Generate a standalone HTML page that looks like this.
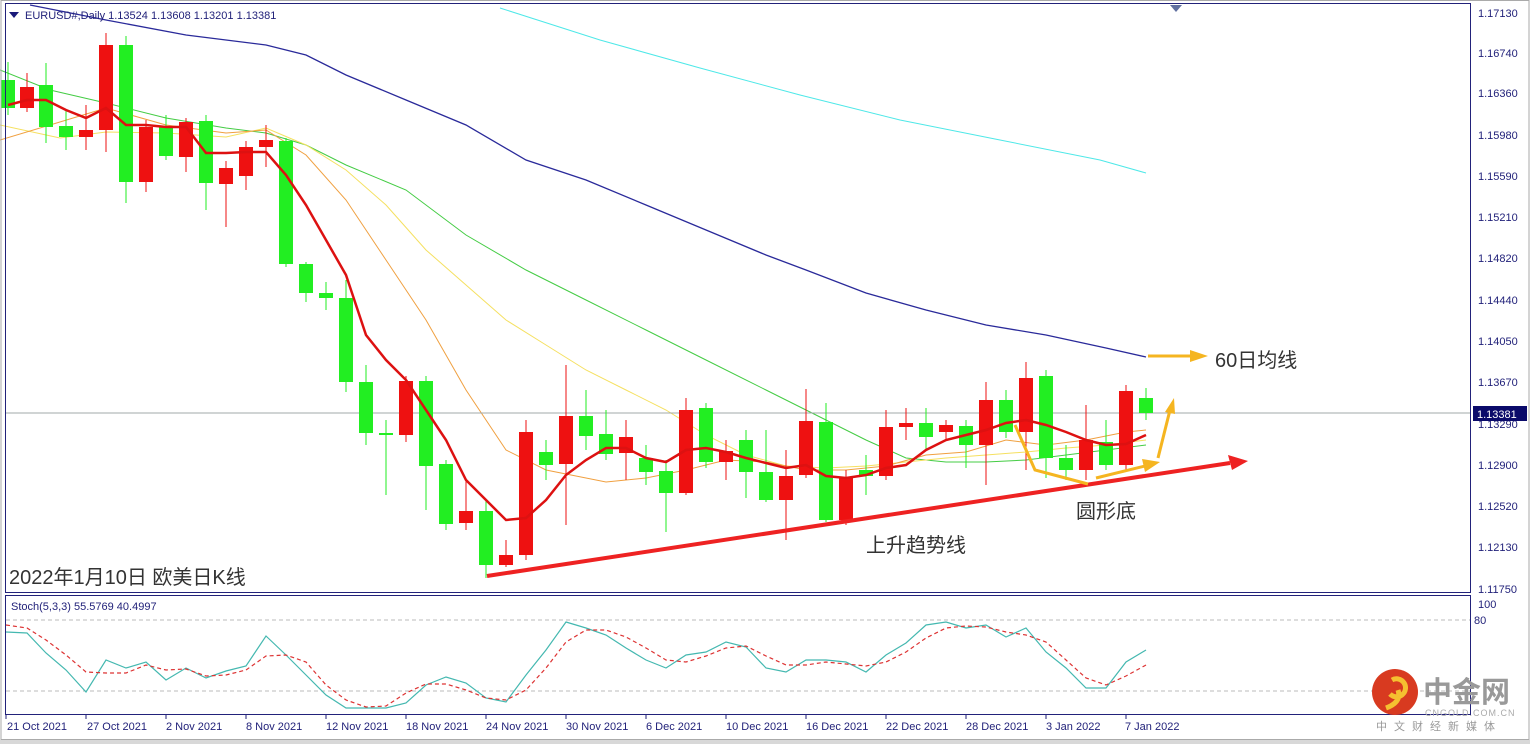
<!DOCTYPE html>
<html><head><meta charset="utf-8"><style>
body{margin:0;background:#fff;width:1530px;height:744px;overflow:hidden;font-family:"Liberation Sans","Noto Sans CJK SC",sans-serif}
svg text{font-family:"Liberation Sans","Noto Sans CJK SC",sans-serif}
</style></head><body>
<svg width="1530" height="744" xmlns="http://www.w3.org/2000/svg">
<rect x="0" y="0" width="1530" height="744" fill="#fff"/>
<rect x="0" y="740" width="1530" height="4" fill="#d8d8d8"/>
<!-- main pane -->
<g fill="none" stroke-width="1">
<polyline stroke="#4ee8e8" points="500,8 600,40 700,68 800,95 900,120 1000,140 1100,160 1146,173"/>
<polyline stroke="#2a2a9a" stroke-width="1.3" points="30,5 106,20 186,35 266,45 306,55 346,75 406,100 466,125 526,160 586,180 646,205 706,230 766,255 806,270 866,293 926,310 986,325 1046,335 1106,348 1146,357"/>
<polyline stroke="#44cc44" points="0,70 50,90 106,103 166,118 226,128 266,133 306,145 346,165 406,190 466,235 526,270 586,300 646,330 706,360 766,390 826,420 866,440 906,458 946,462 986,462 1026,460 1066,455 1106,450 1146,445"/>
<polyline stroke="#f5e060" points="0,125 60,138 106,132 166,133 226,137 266,128 306,145 346,170 386,205 426,250 466,285 506,320 546,345 586,370 626,390 666,410 706,435 746,455 786,466 826,468 866,466 906,462 946,458 986,455 1026,452 1066,448 1106,445 1146,440"/>
<polyline stroke="#f0a040" points="0,140 50,125 106,108 166,125 226,133 266,130 306,155 346,200 386,260 426,320 466,390 506,450 546,470 606,482 646,478 686,470 726,460 766,462 806,470 846,470 886,466 926,455 966,452 1006,440 1046,445 1086,440 1126,432 1146,430"/>
</g>
<line x1="6" y1="413" x2="1470" y2="413" stroke="#a0a8a8" stroke-width="1"/>
<g id="c"></g>
<polyline fill="none" stroke="#dd1111" stroke-width="2.5" points="8,105 27,100 46,100 66,110 86,118 106,108 126,125 146,125 166,127 186,127 206,153 226,153 246,152 266,152 286,175 306,205 326,240 346,275 366,335 386,360 406,380 426,410 446,440 466,480 486,500 506,520 526,518 546,500 566,475 586,460 606,448 626,448 646,458 666,462 686,450 706,448 726,452 746,458 766,463 786,468 806,465 826,476 846,478 866,475 886,468 906,465 926,450 946,440 966,435 986,430 1006,423 1026,420 1046,425 1066,432 1086,440 1106,445 1126,444 1146,435"/>
<!-- annotations -->
<line x1="487" y1="576" x2="1230" y2="463" stroke="#ee2222" stroke-width="4"/>
<polygon points="1248,461 1228,455 1232,470" fill="#ee2222"/>
<line x1="1148" y1="356" x2="1190" y2="356" stroke="#f5b520" stroke-width="3"/>
<polygon points="1208,356 1190,350 1190,362" fill="#f5b520"/>
<polyline fill="none" stroke="#f5b520" stroke-width="3" points="1015,425 1035,470 1088,484"/>
<line x1="1096" y1="478" x2="1145" y2="466" stroke="#f5b520" stroke-width="3"/>
<polygon points="1160,462 1142,459 1145,472" fill="#f5b520"/>
<line x1="1158" y1="458" x2="1170" y2="410" stroke="#f5b520" stroke-width="3"/>
<polygon points="1174,398 1165,412 1175,414" fill="#f5b520"/>
<text x="1215" y="367" font-size="20" fill="#333">60日均线</text>
<text x="1076" y="518" font-size="20" fill="#333">圆形底</text>
<text x="866" y="552" font-size="20" fill="#333">上升趋势线</text>
<text x="9" y="584" font-size="20" fill="#333">2022年1月10日 欧美日K线</text>
<polygon points="9,12 19,12 14,18" fill="#1a1a7a"/>
<text x="25" y="19" font-size="11" fill="#22227a">EURUSD#,Daily  1.13524 1.13608 1.13201 1.13381</text>
<polygon points="1170,5 1182,5 1176,12" fill="#6070a0"/>
<!-- frames -->
<rect x="5.5" y="3.5" width="1465" height="589" fill="none" stroke="#22227a"/>
<rect x="5.5" y="595.5" width="1465" height="119" fill="none" stroke="#22227a"/>
<rect x="1" y="0.5" width="1528" height="739" fill="none" stroke="#aaa"/>
<!-- price axis -->
<g font-size="11" fill="#22227a">
<text x="1478" y="17">1.17130</text><text x="1478" y="57">1.16740</text><text x="1478" y="97">1.16360</text><text x="1478" y="139">1.15980</text><text x="1478" y="180">1.15590</text><text x="1478" y="221">1.15210</text><text x="1478" y="262">1.14820</text><text x="1478" y="304">1.14440</text><text x="1478" y="345">1.14050</text><text x="1478" y="386">1.13670</text><text x="1478" y="428">1.13290</text><text x="1478" y="469">1.12900</text><text x="1478" y="510">1.12520</text><text x="1478" y="551">1.12130</text><text x="1478" y="593">1.11750</text>
<text x="1478" y="608">100</text><text x="1474" y="624">80</text>
</g>
<rect x="1473" y="406" width="54" height="15" fill="#0a0a6a"/>
<text x="1477" y="418" font-size="11" fill="#fff">1.13381</text>
<!-- stoch -->
<text x="11" y="610" font-size="11" fill="#22227a">Stoch(5,3,3) 55.5769 40.4997</text>
<line x1="6" y1="620" x2="1470" y2="620" stroke="#bbb" stroke-dasharray="4,3"/>
<line x1="6" y1="691" x2="1470" y2="691" stroke="#bbb" stroke-dasharray="4,3"/>
<polyline fill="none" stroke="#44b8b0" stroke-width="1.2" points="6,632 27,633 46,653 66,670 86,692 106,660 126,668 146,662 166,680 186,668 206,678 226,671 246,666 266,636 286,655 306,675 326,695 346,708 366,708 386,708 406,703 426,685 446,677 466,683 486,698 506,702 526,675 546,650 566,622 586,628 606,635 626,648 646,660 666,668 686,655 706,652 726,642 746,647 766,668 786,672 806,660 826,660 846,662 866,672 886,655 906,643 926,625 946,622 966,628 986,625 1006,637 1026,628 1046,652 1066,668 1086,688 1106,688 1126,662 1146,650"/>
<polyline fill="none" stroke="#dd3333" stroke-width="1.2" stroke-dasharray="4,3" points="6,625 27,628 46,640 66,655 86,672 106,673 126,673 146,665 166,670 186,669 206,676 226,675 246,670 266,656 286,655 306,662 326,685 346,700 366,707 386,706 406,693 426,684 446,684 466,690 486,698 506,700 526,690 546,668 566,642 586,630 606,630 626,637 646,648 666,660 686,662 706,656 726,648 746,646 766,656 786,665 806,665 826,662 846,664 866,666 886,662 906,652 926,638 946,628 966,626 986,627 1006,632 1026,635 1046,642 1066,660 1086,678 1106,685 1126,676 1146,665"/>
<!-- time axis -->
<g font-size="11" fill="#22227a">
<text x="7" y="730">21 Oct 2021</text><text x="87" y="730">27 Oct 2021</text><text x="166" y="730">2 Nov 2021</text><text x="246" y="730">8 Nov 2021</text><text x="326" y="730">12 Nov 2021</text><text x="406" y="730">18 Nov 2021</text><text x="486" y="730">24 Nov 2021</text><text x="566" y="730">30 Nov 2021</text><text x="646" y="730">6 Dec 2021</text><text x="726" y="730">10 Dec 2021</text><text x="806" y="730">16 Dec 2021</text><text x="886" y="730">22 Dec 2021</text><text x="966" y="730">28 Dec 2021</text><text x="1046" y="730">3 Jan 2022</text><text x="1125" y="730">7 Jan 2022</text>
</g>
<g stroke="#22227a"><line x1="6" y1="714" x2="6" y2="719"/><line x1="86" y1="714" x2="86" y2="719"/><line x1="166" y1="714" x2="166" y2="719"/><line x1="246" y1="714" x2="246" y2="719"/><line x1="326" y1="714" x2="326" y2="719"/><line x1="406" y1="714" x2="406" y2="719"/><line x1="486" y1="714" x2="486" y2="719"/><line x1="566" y1="714" x2="566" y2="719"/><line x1="646" y1="714" x2="646" y2="719"/><line x1="726" y1="714" x2="726" y2="719"/><line x1="806" y1="714" x2="806" y2="719"/><line x1="886" y1="714" x2="886" y2="719"/><line x1="966" y1="714" x2="966" y2="719"/><line x1="1046" y1="714" x2="1046" y2="719"/><line x1="1126" y1="714" x2="1126" y2="719"/></g>
<!-- logo -->
<circle cx="1395" cy="692" r="23" fill="#d83a20"/>
<path d="M1392,680 a9,9 0 1 1 -2,14 M1398,690 q4,12 -12,18" fill="none" stroke="#f5c030" stroke-width="5"/>
<text x="1423" y="702" font-size="29" font-weight="bold" fill="#999">中金网</text>
<text x="1425" y="716" font-size="9" fill="#aaa" letter-spacing="1">CNGOLD.COM.CN</text>
<text x="1376" y="730" font-size="11" fill="#999" letter-spacing="7">中文财经新媒体</text>
</svg>
<script>
const d=[[8,'g',80,108,62,115],[27,'r',87,108,73,112],[46,'g',85,127,63,143],[66,'g',126,137,110,150],[86,'r',130,137,105,150],[106,'r',45,130,33,152],[126,'g',45,182,36,203],[146,'r',127,182,120,192],[166,'g',126,156,115,160],[186,'r',122,157,118,172],[206,'g',121,183,115,210],[226,'r',168,184,161,227],[246,'r',147,176,141,190],[266,'r',140,147,125,167],[286,'g',141,264,138,267],[306,'g',264,293,262,302],[326,'g',293,298,282,310],[346,'g',298,382,280,392],[366,'g',382,433,365,445],[386,'g',433,435,420,495],[406,'r',381,435,376,442],[426,'g',381,466,376,510],[446,'g',464,524,460,530],[466,'r',511,523,480,530],[486,'g',511,565,500,578],[506,'r',555,565,540,567],[526,'r',432,555,420,560],[546,'g',452,465,440,480],[566,'r',416,464,365,525],[586,'g',416,436,390,450],[606,'g',434,454,410,460],[626,'r',437,453,420,480],[646,'g',458,472,445,485],[666,'g',471,493,460,532],[686,'r',410,493,398,495],[706,'g',408,462,403,468],[726,'r',451,462,440,480],[746,'g',440,472,430,498],[766,'g',472,500,430,502],[786,'r',476,500,450,540],[806,'r',421,475,389,478],[826,'g',422,520,403,522],[846,'r',477,520,470,525],[866,'g',470,476,455,495],[886,'r',427,476,410,480],[906,'r',423,427,408,440],[926,'g',423,437,408,450],[946,'r',425,432,420,440],[966,'g',426,445,420,468],[986,'r',400,445,382,485],[1006,'g',400,432,390,438],[1026,'r',378,432,362,470],[1046,'g',376,458,370,478],[1066,'g',458,470,445,480],[1086,'r',440,470,405,480],[1106,'g',442,465,420,470],[1126,'r',391,465,385,470],[1146,'g',398,413,388,420]];
let s='';for(const [x,c,t,b,h,l] of d){const col=c=='g'?'#22ee22':'#ee1111';s+=`<line x1="${x}" y1="${h}" x2="${x}" y2="${l}" stroke="${col}" stroke-width="1"/><rect x="${x-7}" y="${t}" width="14" height="${Math.max(2,b-t)}" fill="${col}"/>`;}
document.getElementById('c').innerHTML=s;
</script>
</body></html>
